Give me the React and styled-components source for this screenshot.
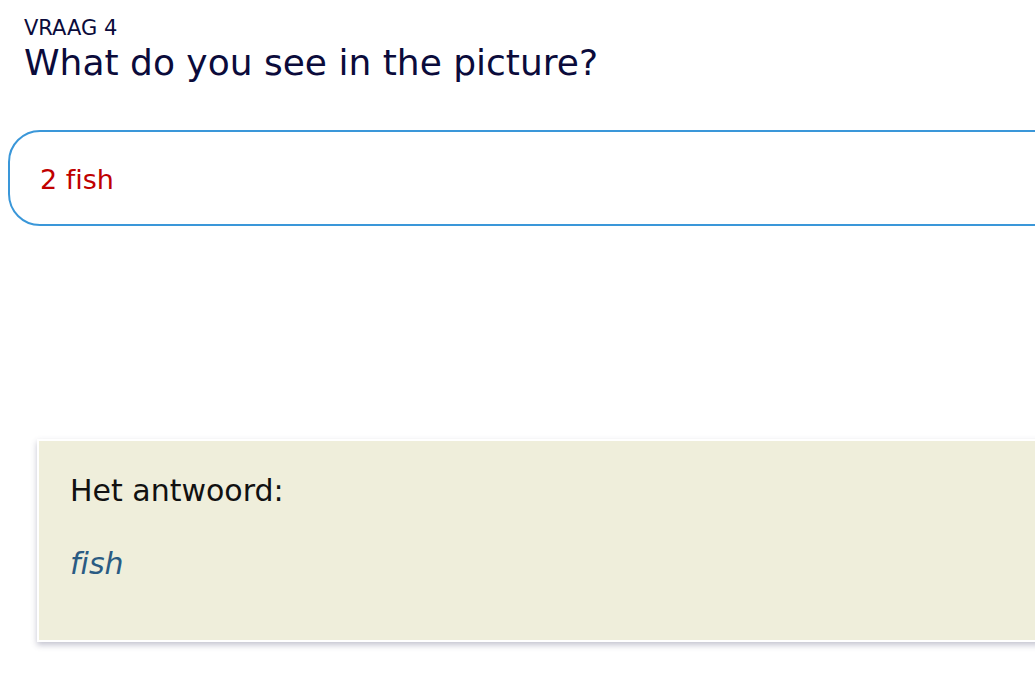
import React from "react";
import styled, { createGlobalStyle } from "styled-components";

const GlobalStyle = createGlobalStyle`
  html, body {
    margin: 0;
    padding: 0;
    background: #ffffff;
    overflow: hidden;
  }
  body {
    font-family: "DejaVu Sans", Verdana, sans-serif;
    font-variant-ligatures: none;
  }
`;

const Page = styled.div`
  width: 1035px;
  height: 673px;
  overflow: hidden;
`;

const Header = styled.header`
  padding: 16px 0 0 24px;
  color: #0b0b3b;
`;

const Label = styled.div`
  font-size: 21px;
  line-height: 24px;
`;

const Question = styled.h1`
  margin: 0;
  font-size: 36px;
  font-weight: normal;
  line-height: 45px;
`;

const AnswerInput = styled.div`
  margin: 45px -40px 0 8px;
  height: 96px;
  box-sizing: border-box;
  border: 2px solid #3a97d9;
  border-radius: 32px;
  display: flex;
  align-items: center;
  padding: 2px 0 0 30px;
  font-size: 27px;
  color: #c00000;
`;

const Feedback = styled.section`
  margin: 213px -40px 0 37px;
  height: 203px;
  box-sizing: border-box;
  background: #efeedb;
  border: 2px solid #ffffff;
  box-shadow: 0 3px 6px rgba(60, 60, 100, 0.3);
  padding: 30px 0 0 31px;
`;

const FeedbackTitle = styled.div`
  font-size: 30px;
  line-height: 40px;
  color: #111111;
`;

const Correct = styled.div`
  margin-top: 33px;
  font-size: 30px;
  line-height: 40px;
  font-style: italic;
  color: #2a5b83;
`;

export default function App() {
  return (
    <Page>
      <GlobalStyle />
      <Header>
        <Label>VRAAG 4</Label>
        <Question>What do you see in the picture?</Question>
      </Header>
      <AnswerInput>2 fish</AnswerInput>
      <Feedback>
        <FeedbackTitle>Het antwoord:</FeedbackTitle>
        <Correct>fish</Correct>
      </Feedback>
    </Page>
  );
}
